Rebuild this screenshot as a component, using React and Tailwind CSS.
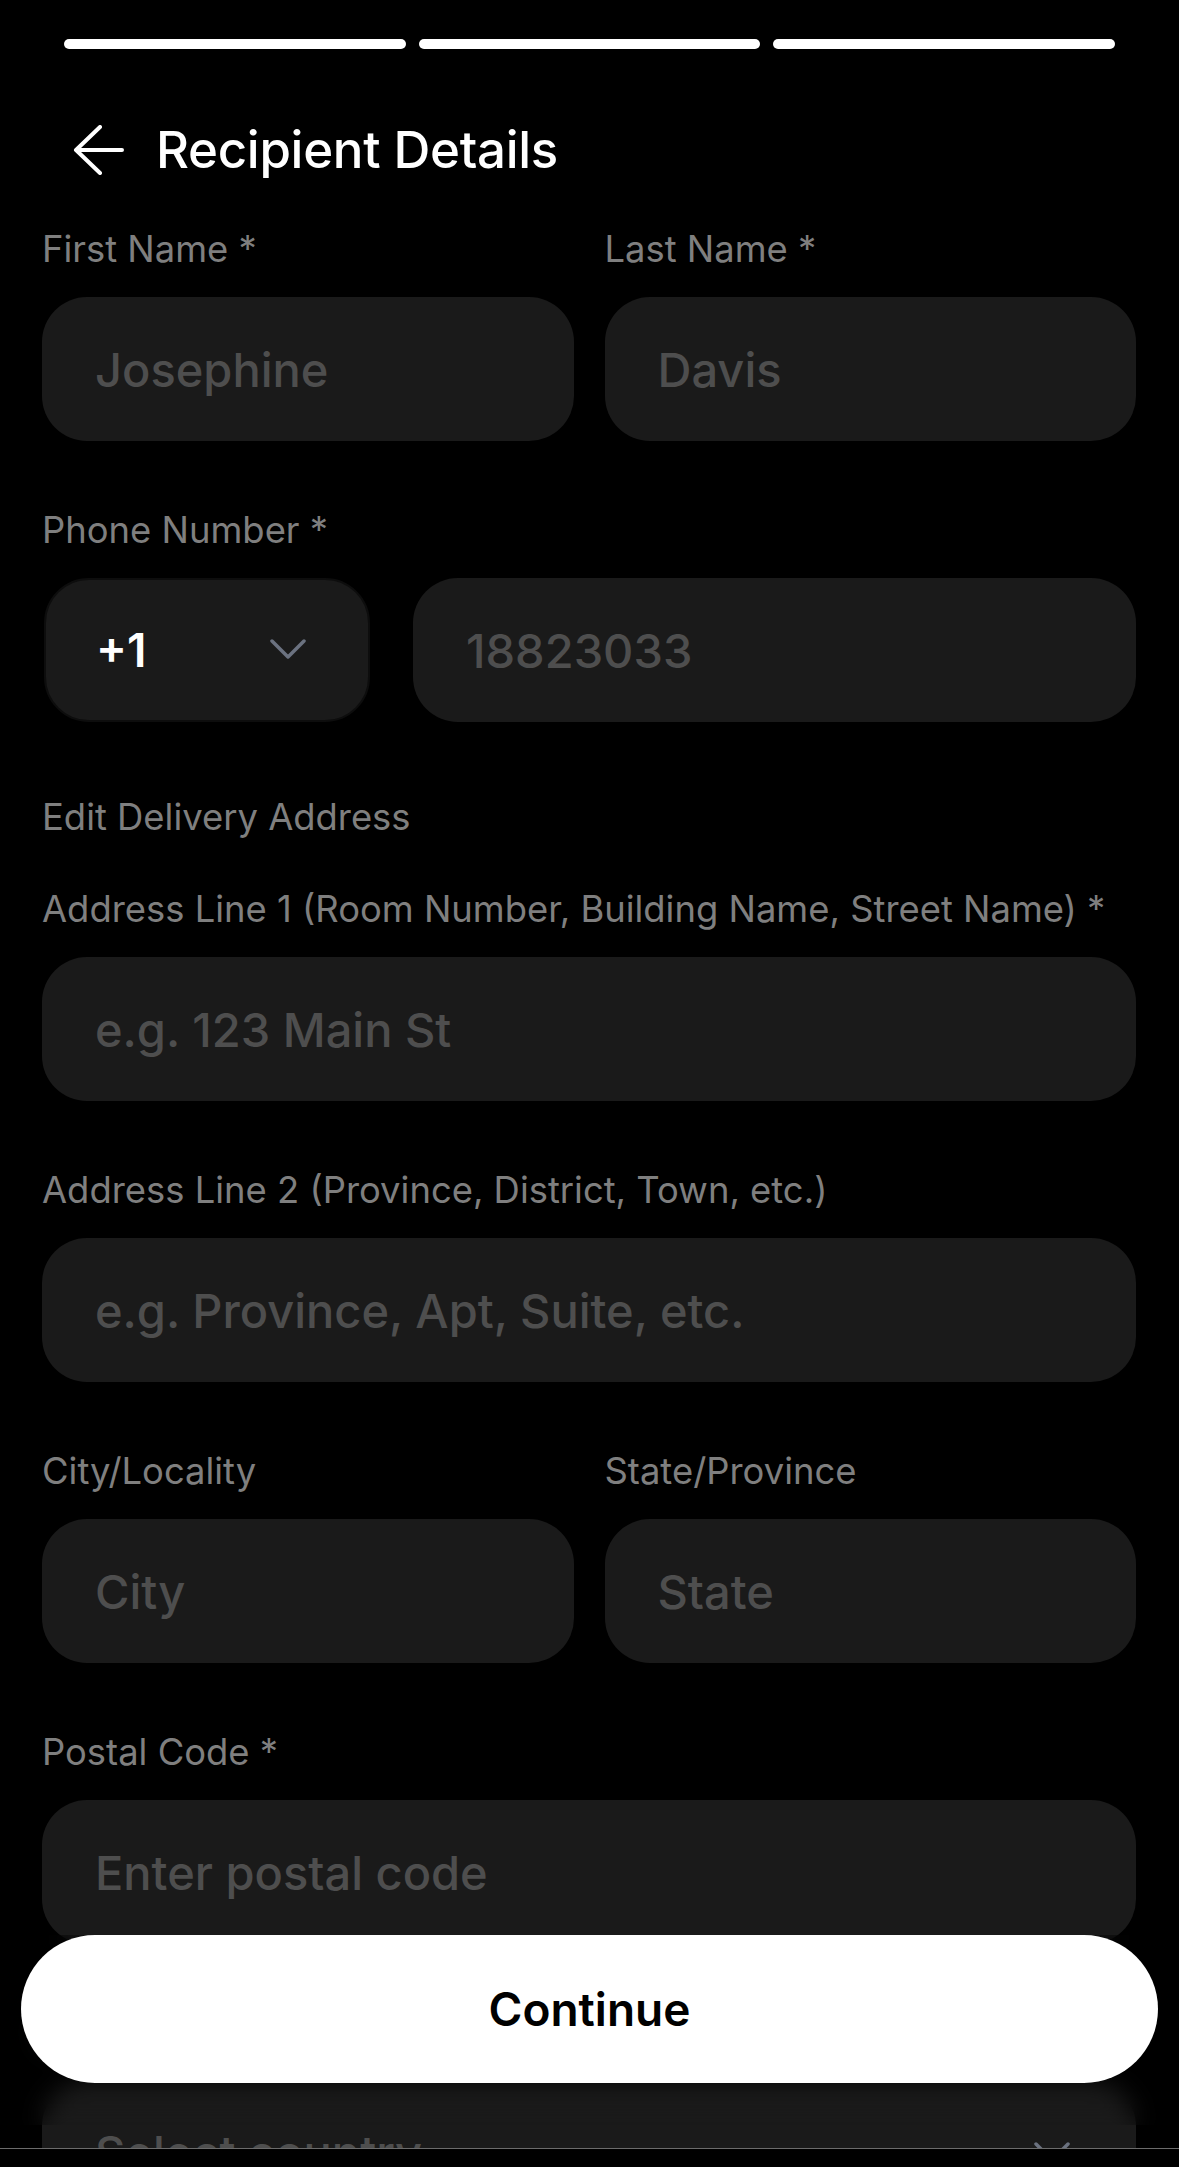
import React from 'react'

const labelCls = 'block text-[36.4px] leading-[40px] text-[#7f7f7f] mb-[28px]'
const inputCls =
  'w-full h-[144px] rounded-[45px] bg-[#1a1a1a] pl-[53px] pr-[40px] text-[47px] font-medium text-white placeholder:text-[#4e4e4e] outline-none'

function Chevron() {
  return (
    <svg width="36" height="22" viewBox="0 0 36 22" fill="none">
      <path d="M2 2L18 18L34 2" stroke="#6b7280" strokeWidth="3.5" strokeLinecap="round" strokeLinejoin="round" />
    </svg>
  )
}

function Field({ label, placeholder }) {
  return (
    <div>
      <label className={labelCls}>{label}</label>
      <input className={inputCls} placeholder={placeholder} />
    </div>
  )
}

export default function App() {
  return (
    <div className="relative h-[2167px] w-full bg-black flex flex-col overflow-hidden font-['Inter',sans-serif]">
      <div className="flex-1 overflow-hidden">
        {/* Progress */}
        <div className="flex gap-[13px] px-[64px] pt-[39px]">
          <div className="h-[10px] flex-1 rounded-full bg-white"></div>
          <div className="h-[10px] flex-1 rounded-full bg-white"></div>
          <div className="h-[10px] flex-1 rounded-full bg-white"></div>
        </div>

        {/* Header */}
        <div className="mt-[69px] h-[64px] flex items-center pl-[73px] gap-[31px]">
          <svg width="52" height="50" viewBox="0 0 52 50" fill="none">
            <path d="M49 25H4M27 2L3 25L27 48" stroke="white" strokeWidth="4" strokeLinecap="round" strokeLinejoin="round" />
          </svg>
          <h1 className="text-[51px] font-medium text-white tracking-[-0.3px]">Recipient Details</h1>
        </div>

        {/* Form */}
        <div className="mt-[47px] pl-[42px] pr-[43px]">
          <div className="grid grid-cols-2 gap-[31px]">
            <Field label="First Name *" placeholder="Josephine" />
            <Field label="Last Name *" placeholder="Davis" />
          </div>

          <div className="mt-[69px]">
            <label className={labelCls}>Phone Number *</label>
            <div className="flex gap-[43px]">
              <button className="ml-[2px] w-[326px] h-[144px] shrink-0 rounded-[45px] bg-[#1a1a1a] border-2 border-[#0d0d0d] flex items-center justify-between pl-[50px] pr-[62px]">
                <span className="text-[46px] font-semibold text-white">+1</span>
                <Chevron />
              </button>
              <input className={inputCls} placeholder="18823033" />
            </div>
          </div>

          <p className="mt-[75px] text-[36.4px] leading-[40px] text-[#7f7f7f]">Edit Delivery Address</p>

          <div className="mt-[52px]">
            <Field label="Address Line 1 (Room Number, Building Name, Street Name) *" placeholder="e.g. 123 Main St" />
          </div>

          <div className="mt-[69px]">
            <Field label="Address Line 2 (Province, District, Town, etc.)" placeholder="e.g. Province, Apt, Suite, etc." />
          </div>

          <div className="mt-[69px] grid grid-cols-2 gap-[31px]">
            <Field label="City/Locality" placeholder="City" />
            <Field label="State/Province" placeholder="State" />
          </div>

          <div className="mt-[69px]">
            <Field label="Postal Code *" placeholder="Enter postal code" />
          </div>

          <div className="mt-[69px]">
            <label className={labelCls}>Country *</label>
            <button className="w-full h-[144px] rounded-[45px] bg-[#1a1a1a] flex items-center justify-between pl-[53px] pr-[66px]">
              <span className="text-[47px] font-medium text-[#4e4e4e]">Select country</span>
              <Chevron />
            </button>
          </div>
        </div>
      </div>

      {/* Bottom bar */}
      <div className="h-[19px] shrink-0 border-t border-[#6b6b6b] bg-black"></div>

      {/* Continue */}
      <div className="absolute left-0 right-0 bottom-[42px] px-[21px] pb-[42px] backdrop-blur-md">
        <button className="w-full h-[148px] rounded-full bg-white text-[46px] font-semibold text-black">
          Continue
        </button>
      </div>
    </div>
  )
}
